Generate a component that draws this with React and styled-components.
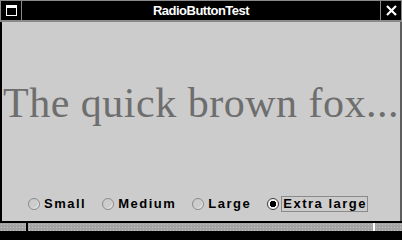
import React, { useState } from 'react';
import styled, { createGlobalStyle } from 'styled-components';

const GlobalStyle = createGlobalStyle`
  html, body {
    margin: 0;
    padding: 0;
    background: #000;
    overflow: hidden;
  }
`;

const Frame = styled.div`
  display: flex;
  flex-direction: column;
  width: 402px;
  height: 232px;
  background: #000;
`;

const TitleBar = styled.div`
  display: flex;
  gap: 1px;
  height: 22px;
  padding: 1px 1px 2px;
  box-sizing: border-box;
  background: #8a8a8a;
`;

const TitleCell = styled.div`
  display: flex;
  align-items: center;
  justify-content: center;
  background: #000;
  width: ${(p) => (p.$wide ? 'auto' : '20px')};
  flex: ${(p) => (p.$wide ? 1 : 'none')};
  color: #fff;
  font-family: 'Liberation Sans', Arial, sans-serif;
  font-weight: bold;
  font-size: 13px;
  letter-spacing: -0.5px;
`;

const WindowIcon = styled.span`
  width: 11px;
  height: 11px;
  box-sizing: border-box;
  border: 1px solid #fff;
  border-top-width: 3px;
`;

const Content = styled.div`
  flex: 1;
  display: flex;
  flex-direction: column;
  background: #cccccc;
  border-left: 2px solid #000;
  border-right: 2px solid #5e5e5e;
`;

const Sample = styled.div`
  flex: 1;
  display: flex;
  align-items: center;
  justify-content: center;
  padding-bottom: 8px;
  font-family: 'Liberation Serif', 'Times New Roman', serif;
  font-size: 42px;
  letter-spacing: 0.5px;
  color: #6e6e6e;
  white-space: nowrap;
`;

const RadioRow = styled.div`
  display: flex;
  justify-content: center;
  align-items: center;
  gap: 15px;
  height: 24px;
  margin-bottom: 5px;
  padding-right: 6px;
`;

const Option = styled.label`
  display: flex;
  align-items: center;
  gap: 2px;
  font-family: 'Liberation Sans', Arial, sans-serif;
  font-weight: bold;
  font-size: 13px;
  letter-spacing: 1.5px;
  color: #000;
  cursor: default;
`;

const Dot = styled.span`
  width: 12px;
  height: 12px;
  box-sizing: border-box;
  border-radius: 50%;
  border: 1px solid ${(p) => (p.$on ? '#3a3a3a' : '#8a8a8a')};
  box-shadow: inset -1px -1px 0 ${(p) => (p.$on ? '#f4f4f4' : '#e4e4e4')};
  background: ${(p) =>
    p.$on
      ? 'radial-gradient(circle, #000 0 3px, #f4f4f4 3.5px 100%)'
      : '#cccccc'};
`;

const Caption = styled.span`
  height: 16px;
  line-height: 16px;
  padding: 0 0 0 1px;
  box-sizing: border-box;
  border: 1px solid ${(p) => (p.$focus ? '#8a8a8a' : 'transparent')};
  display: flex;
  align-items: center;
`;

const BottomBar = styled.div`
  display: flex;
  height: 11px;
  padding: 2px 0 1px;
  box-sizing: border-box;
  background: #000;
`;

const Segment = styled.div`
  width: ${(p) => (p.$w ? `${p.$w}px` : 'auto')};
  flex: ${(p) => (p.$w ? 'none' : 1)};
  background-color: #a4a4a4;
  background-image: radial-gradient(circle, #c2c2c2 0.7px, transparent 0.9px);
  background-size: 3px 3px;
`;

const Gap = styled.div`
  width: 2px;
  background: ${(p) => p.$color};
`;

const sizes = ['Small', 'Medium', 'Large', 'Extra large'];

export default function App() {
  const [size, setSize] = useState('Extra large');

  return (
    <>
      <GlobalStyle />
      <Frame>
        <TitleBar>
          <TitleCell>
            <WindowIcon />
          </TitleCell>
          <TitleCell $wide>RadioButtonTest</TitleCell>
          <TitleCell>
            <svg width="11" height="11" viewBox="0 0 11 11">
              <path d="M1 1 L10 10 M10 1 L1 10" stroke="#fff" strokeWidth="2.2" />
            </svg>
          </TitleCell>
        </TitleBar>

        <Content>
          <Sample>The quick brown fox...</Sample>
          <RadioRow>
            {sizes.map((s) => (
              <Option key={s} onClick={() => setSize(s)}>
                <Dot $on={size === s} />
                <Caption $focus={size === s}>{s}</Caption>
              </Option>
            ))}
          </RadioRow>
        </Content>

        <BottomBar>
          <Segment $w={26} />
          <Gap $color="#000" />
          <Segment />
          <Gap $color="#fff" />
          <Segment $w={27} />
        </BottomBar>
      </Frame>
    </>
  );
}
